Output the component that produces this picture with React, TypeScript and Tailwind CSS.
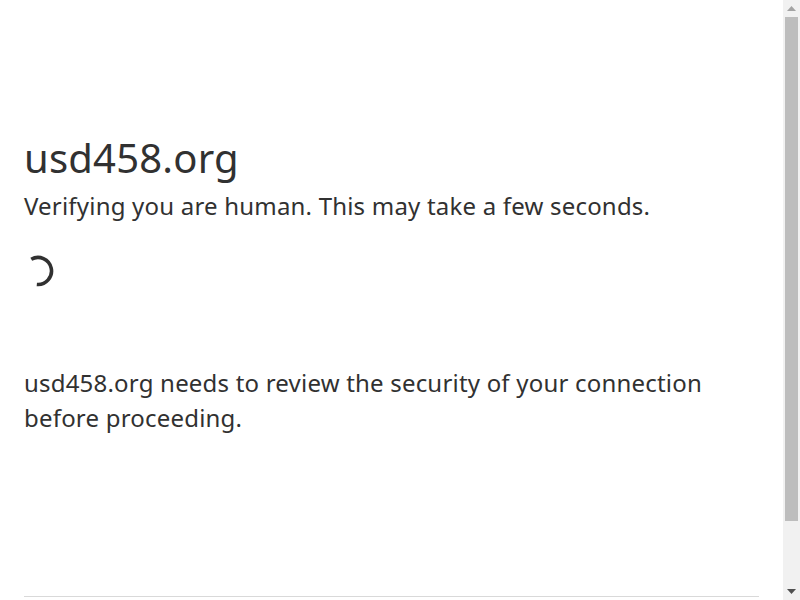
export default function App() {
  return (
    <div
      className="h-[600px] overflow-hidden bg-white text-[#313131] flex flex-row"
      style={{ fontFamily: '"Noto Sans", "Open Sans", sans-serif' }}
    >
      <div className="flex-1 flex flex-col px-6">
        <div className="pt-[128px]">
          <h1 className="text-[40px] leading-[60px] font-normal tracking-[0.2px]">usd458.org</h1>
          <h2 className="text-[24px] leading-[36px] font-normal tracking-[0.2px]">
            Verifying you are human. This may take a few seconds.
          </h2>
          <div className="mt-[30px] -ml-[3px] h-[34px] w-[34px]">
            <svg width="34" height="34" viewBox="0 0 34 34">
              <path
                d="M10.25 5.31 A13.5 13.5 0 1 1 15.82 30.45"
                fill="none"
                stroke="#313131"
                strokeWidth="3.6"
              />
            </svg>
          </div>
          <p className="mt-[77px] text-[24px] leading-[35px] tracking-[0.2px] max-w-[720px]">
            usd458.org needs to review the security of your connection before proceeding.
          </p>
        </div>
        <div className="flex-1" />
        <div className="border-t border-[#d9d9d9] h-[4px]" />
      </div>
      <div className="w-[17px] bg-[#f1f1f1] flex flex-col items-center">
        <div className="h-[17px] w-full flex items-center justify-center">
          <svg width="9" height="5" viewBox="0 0 9 5">
            <path d="M0 5 L4.5 0 L9 5 Z" fill="#a3a3a3" />
          </svg>
        </div>
        <div className="h-[504px] w-[13px] bg-[#bdbdbd]" />
        <div className="flex-1" />
        <div className="h-[17px] w-full flex items-center justify-center">
          <svg width="9" height="5" viewBox="0 0 9 5">
            <path d="M0 0 L9 0 L4.5 5 Z" fill="#505050" />
          </svg>
        </div>
      </div>
    </div>
  );
}
